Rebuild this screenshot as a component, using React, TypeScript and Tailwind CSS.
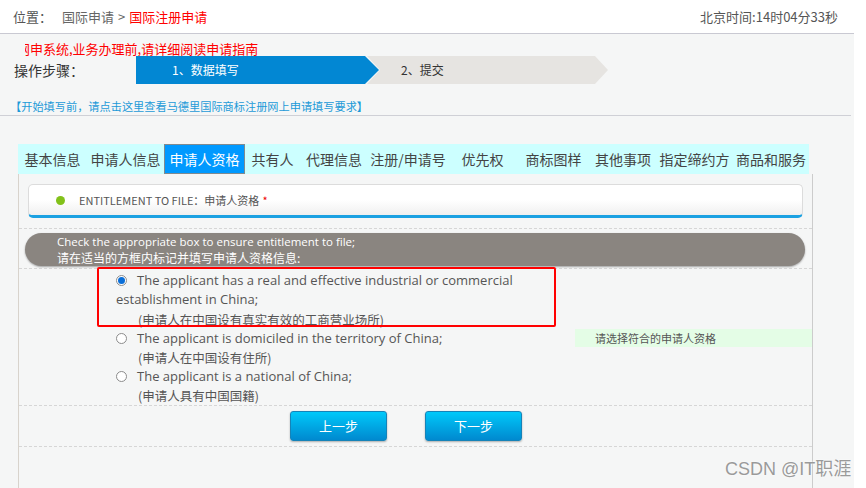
import React from "react";

const tabs = [
  { label: "基本信息", w: "w-[69px]" },
  { label: "申请人信息", w: "w-[77px]" },
  { label: "申请人资格", w: "w-[81px]", active: true },
  { label: "共有人", w: "w-[55px]" },
  { label: "代理信息", w: "w-[68px]" },
  { label: "注册/申请号", w: "w-[80px]" },
  { label: "优先权", w: "w-[69px]" },
  { label: "商标图样", w: "w-[73px]" },
  { label: "其他事项", w: "w-[66px]" },
  { label: "指定缔约方", w: "w-[77px]" },
  { label: "商品和服务", w: "w-[76px]" },
];

function Radio({ checked }: { checked?: boolean }) {
  return (
    <span className="inline-flex h-[11px] w-[11px] shrink-0 items-center justify-center rounded-full border border-[#8c8c8c] bg-white">
      {checked ? <span className="h-[7px] w-[7px] rounded-full bg-[#0b6fd8]" /> : null}
    </span>
  );
}

function Dotted() {
  return <div className="h-0 border-t border-dashed border-[#d6d6d6]" />;
}

export default function App() {
  return (
    <div className="relative h-[488px] w-[866px] overflow-hidden bg-white font-['Noto_Sans_CJK_SC',sans-serif] text-[#444]">
      <div className="h-full w-[854px] bg-[#f5f6f6]">
        {/* top bar */}
        <div className="flex h-[34px] items-center justify-between border-b border-[#c9c9d2] bg-white pl-[13px] pr-[16px] text-[13px]">
          <div className="flex items-center">
            <span className="text-[#555]">位置：</span>
            <span className="ml-[10px] text-[#666]">国际申请</span>
            <span className="mx-[4px] text-[#666]">&gt;</span>
            <span className="text-[#ff0000]">国际注册申请</span>
          </div>
          <span className="text-[13px] text-[#555]">北京时间:14时04分33秒</span>
        </div>

        {/* notice + steps */}
        <div className="ml-[25px] mt-[6px] h-[16px] w-[240px] overflow-hidden">
          <div className="-ml-[8px] whitespace-nowrap text-[13px] leading-[17px] text-[#ff0000]">
            网申系统,业务办理前,请详细阅读申请指南
          </div>
        </div>
        <div className="flex h-[28px] items-center">
          <span className="ml-[14px] w-[122px] text-[14px] text-[#333]">操作步骤：</span>
          <div className="flex h-[28px] items-stretch">
            <div className="relative z-10 flex w-[243px] items-center bg-[#0287d3] pl-[36px] text-[12px] text-white [clip-path:polygon(0_0,229px_0,243px_50%,229px_100%,0_100%)]">
              1、数据填写
            </div>
            <div className="-ml-[12px] flex w-[241px] items-center bg-[#e6e4e1] pl-[34px] text-[12px] text-[#333] [clip-path:polygon(0_0,228px_0,241px_50%,228px_100%,0_100%,13px_50%)]">
              2、提交
            </div>
          </div>
        </div>
        <div className="ml-[10px] mt-[13px] h-[18px] whitespace-nowrap text-[11.2px] leading-[18px] text-[#1c9ad8]">
          【开始填写前，请点击这里查看马德里国际商标注册网上申请填写要求】
        </div>
        <div className="mr-[3px] border-t border-[#cfd0d6]" />

        {/* tabs */}
        <div className="ml-[18px] mt-[28px] flex h-[30px] w-[791px] bg-[#ccffff] text-[14px] text-[#444]">
          {tabs.map((t) => (
            <div
              key={t.label}
              className={
                t.active
                  ? `${t.w} flex items-center justify-center border border-[#7f8a90] bg-[#0099ff] text-white`
                  : `${t.w} flex items-center justify-center`
              }
            >
              {t.label}
            </div>
          ))}
        </div>

        {/* panel */}
        <div className="ml-[18px] h-[320px] w-[795px] border-l border-r border-l-[#d8d3cc] border-r-[#cccccc] text-[12px]">
          <div className="px-[9px] pt-[10px]">
            <div className="flex h-[34px] items-center rounded-[5px] border border-[#dcdcdc] border-b-[3px] border-b-[#1ba1e2] bg-gradient-to-b from-white via-white to-[#f0f0f0] pl-[27px] text-[11px] text-[#555]">
              <span className="h-[9px] w-[9px] rounded-full bg-[#82c11a]" />
              <span className="ml-[14px]">ENTITLEMENT TO FILE：申请人资格</span>
              <span className="ml-[3px] text-[#e00]">*</span>
            </div>
          </div>
          <div className="mt-[10px]">
            <Dotted />
          </div>
          <div className="px-[6px] pt-[4px]">
            <div className="flex h-[33px] w-[780px] flex-col justify-center rounded-[17px] bg-[#8a8580] pl-[32px] text-[12px] leading-[16px] text-white shadow-[0_1px_2px_rgba(0,0,0,0.35)]">
              <span className="font-['Open_Sans','Noto_Sans_CJK_SC',sans-serif] text-[11.5px]">Check the appropriate box to ensure entitlement to file;</span>
              <span>请在适当的方框内标记并填写申请人资格信息:</span>
            </div>
          </div>
          <div className="mt-[2px]">
            <Dotted />
          </div>

          {/* options */}
          <div className="relative h-[136px] font-['Open_Sans','Noto_Sans_CJK_SC',sans-serif] text-[13px] leading-[19px] text-[#555]">
            <div className="ml-[97px] w-[440px] pt-[2px]">
              <div className="flex items-center">
                <Radio checked />
                <span className="ml-[10px] whitespace-nowrap">The applicant has a real and effective industrial or commercial</span>
              </div>
              <div>establishment in China;</div>
              <div className="pl-[22px] pt-[1px] font-['Noto_Sans_CJK_SC',sans-serif] text-[12.5px]">(申请人在中国设有真实有效的工商营业场所)</div>
              <div className="flex items-center">
                <Radio />
                <span className="ml-[10px]">The applicant is domiciled in the territory of China;</span>
              </div>
              <div className="pl-[22px] font-['Noto_Sans_CJK_SC',sans-serif] text-[12.5px]">(申请人在中国设有住所)</div>
              <div className="flex items-center">
                <Radio />
                <span className="ml-[10px]">The applicant is a national of China;</span>
              </div>
              <div className="pl-[22px] font-['Noto_Sans_CJK_SC',sans-serif] text-[12.5px]">(申请人具有中国国籍)</div>
            </div>
            <div className="absolute left-[556px] top-[60px] flex h-[18px] w-[237px] items-center bg-[#e4fde6] pl-[20px] font-['Noto_Sans_CJK_SC',sans-serif] text-[11px] text-[#555]">
              请选择符合的申请人资格
            </div>
            <div className="pointer-events-none absolute left-[78px] top-[-2px] h-[60px] w-[459px] rounded-[2px] border-2 border-[#ff0000]" />
          </div>

          <Dotted />
          <div className="flex h-[40px] items-center pl-[271px]">
            <button className="h-[30px] w-[97px] rounded-[3px] border border-[#1683b8] bg-gradient-to-b from-[#00c9fa] to-[#0089cf] text-[13px] text-white shadow-[0_1px_2px_rgba(0,0,0,0.3)]">
              上一步
            </button>
            <button className="ml-[38px] h-[30px] w-[97px] rounded-[3px] border border-[#1683b8] bg-gradient-to-b from-[#00c9fa] to-[#0089cf] text-[13px] text-white shadow-[0_1px_2px_rgba(0,0,0,0.3)]">
              下一步
            </button>
          </div>
          <Dotted />
        </div>
      </div>

      <div className="absolute left-[725px] top-[456px] font-['Liberation_Sans','Noto_Sans_CJK_SC',sans-serif] text-[18px] text-[#9a9a9a] [text-shadow:0_0_2px_white]">
        CSDN @IT职涯
      </div>
    </div>
  );
}
